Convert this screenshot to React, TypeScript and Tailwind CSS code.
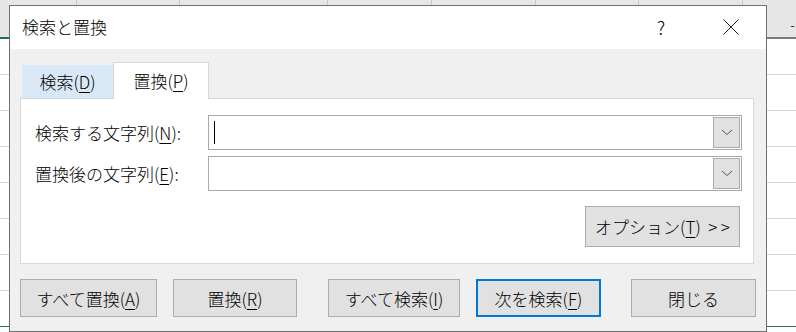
import React from "react";

const U = ({ c }: { c: string }) => <span className="underline underline-offset-[3px] decoration-1">{c}</span>;

function Btn({ w, ml, children, focus }: { w: string; ml: string; children: React.ReactNode; focus?: boolean }) {
  return (
    <div
      className={`${w} ${ml} h-[38px] flex items-center justify-center bg-[#e1e1e1] ${focus ? "border-2 border-[#0078d7]" : "border border-[#adadad]"}`}
    >
      {children}
    </div>
  );
}

function Combo({ cursor }: { cursor?: boolean }) {
  return (
    <div className="w-[534px] h-[35px] border border-[#a9a9a9] bg-white flex items-center justify-between p-[1px]">
      <div className="pl-[4px] flex items-center h-full">
        {cursor && <div className="w-[1px] h-[23px] bg-black" />}
      </div>
      <div className="w-[27px] h-full bg-[#e1e1e1] border border-[#adadad] flex items-center justify-center">
        <svg width="12" height="7" viewBox="0 0 12 7">
          <path d="M1 1 L6 5.5 L11 1" fill="none" stroke="#555" strokeWidth="1" />
        </svg>
      </div>
    </div>
  );
}

export default function App() {
  const rows = [0, 1, 2, 3, 4, 5, 6, 7];
  return (
    <div
      className="relative w-[796px] h-[332px] overflow-hidden bg-white text-black font-light"
      style={{ fontFamily: '"Noto Sans CJK JP", "Noto Sans", sans-serif' }}
    >
      {/* spreadsheet background */}
      <div className="h-[37px] bg-[#e6e6e6] flex">
        <div className="w-[77px] border-r border-[#c8c8c8]" />
        <div className="w-[103px] border-r border-[#c8c8c8]" />
        <div className="w-[148px] border-r border-[#c8c8c8]" />
        <div className="w-[104px] border-r border-[#c8c8c8]" />
        <div className="w-[104px] border-r border-[#c8c8c8]" />
        <div className="w-[103px] border-r border-[#c8c8c8]" />
        <div className="w-[104px] border-r border-[#c8c8c8]" />
        <div className="flex-1 flex items-end justify-end pb-[6px] pr-[1px] text-[14px] leading-none">-</div>
      </div>
      <div className="h-[2px] flex">
        <div className="w-[10px] bg-[#217346]" />
        <div className="flex-1" />
        <div className="w-[30px] bg-[#7a7a7a]" />
      </div>
      {rows.map((r) => (
        <div key={r} className={`h-[36px] border-b ${r === 7 ? "border-[#217346]" : "border-[#d4d4d4]"}`} />
      ))}

      {/* dialog */}
      <div className="absolute left-[9px] top-[5px] w-[758px] h-[327px] border border-[#707070] bg-[#f0f0f0] flex flex-col">
        <div className="h-[43px] bg-white flex items-center text-[17px] leading-none">
          <div className="pl-[12px] pb-[2px]">検索と置換</div>
          <div className="flex-1" />
          <div className="w-[20px] text-center text-[18px] pb-[2px]">?</div>
          <div className="w-[52px]" />
          <svg width="16" height="16" viewBox="0 0 16 16" className="mb-[1px]">
            <path d="M0.5 0.5 L15.5 15.5 M15.5 0.5 L0.5 15.5" stroke="#222" strokeWidth="1" />
          </svg>
          <div className="w-[27px]" />
        </div>

        <div className="pl-[10px] pt-[13px] text-[17px] leading-none">
          {/* tabs */}
          <div className="flex items-end pl-[2px] h-[36px]">
            <div className="w-[91px] h-[33px] bg-[#d9e8f7] flex items-center justify-center pb-[1px]">
              検索(<U c="D" />)
            </div>
            <div className="w-[96px] h-[37px] bg-white border border-b-0 border-[#d9d9d9] flex items-center justify-center pb-[1px] mb-[-1px] relative z-10">
              置換(<U c="P" />)
            </div>
          </div>
          {/* panel */}
          <div className="w-[734px] h-[166px] bg-white border border-[#d9d9d9] pt-[16px] pl-[14px] flex flex-col">
            <div className="flex items-center">
              <div className="w-[173px]">検索する文字列(<U c="N" />):</div>
              <Combo cursor />
            </div>
            <div className="flex items-center mt-[6px]">
              <div className="w-[173px]">置換後の文字列(<U c="E" />):</div>
              <Combo />
            </div>
            <div className="flex justify-end pr-[13px] mt-[15px]">
              <div className="w-[155px] h-[41px] bg-[#e1e1e1] border border-[#adadad] flex items-center justify-center">
                オプション(<U c="T" />)&nbsp;&nbsp;&gt;&thinsp;&gt;
              </div>
            </div>
          </div>

          {/* bottom buttons */}
          <div className="flex mt-[15px]">
            <Btn w="w-[137px]" ml="ml-0">すべて置換(<U c="A" />)</Btn>
            <Btn w="w-[124px]" ml="ml-[16px]">置換(<U c="R" />)</Btn>
            <Btn w="w-[132px]" ml="ml-[31px]">すべて検索(<U c="I" />)</Btn>
            <Btn w="w-[125px]" ml="ml-[16px]" focus>次を検索(<U c="F" />)</Btn>
            <Btn w="w-[125px]" ml="ml-[30px]">閉じる</Btn>
          </div>
        </div>
      </div>
    </div>
  );
}
